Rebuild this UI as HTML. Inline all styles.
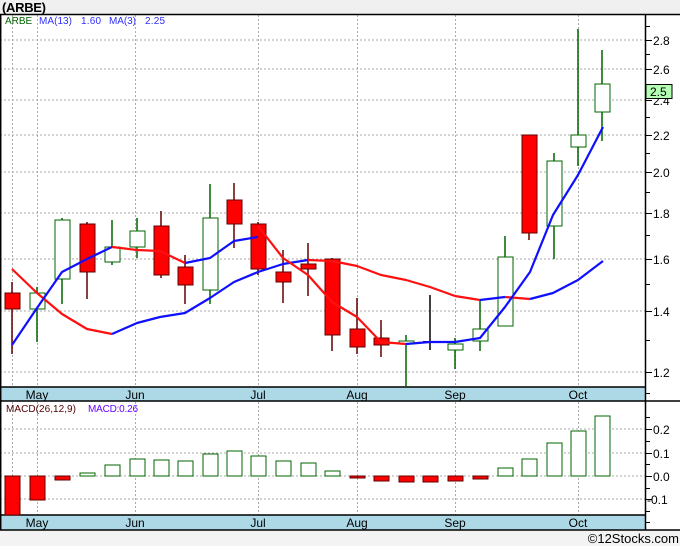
<!DOCTYPE html>
<html><head><meta charset="utf-8"><style>
html,body{margin:0;padding:0;background:#fff;}
svg{display:block;font-family:"Liberation Sans","DejaVu Sans",sans-serif;}
</style></head><body>
<svg width="680" height="546" viewBox="0 0 680 546" xmlns="http://www.w3.org/2000/svg">
<rect x="0" y="0" width="680" height="14" fill="#f0f0f0"/>
<text x="2" y="12" font-size="13" font-weight="bold" fill="#000" textLength="44">(ARBE)</text>
<rect x="0" y="530" width="680" height="16" fill="#f3f3f3"/>
<text x="679" y="543" font-size="13" text-anchor="end" fill="#000">©12Stocks.com</text>

<g stroke="#aaa" stroke-width="1" stroke-dasharray="2,2">
<line x1="0" y1="40" x2="645" y2="40"/><line x1="0" y1="69" x2="645" y2="69"/><line x1="0" y1="100" x2="645" y2="100"/>
<line x1="0" y1="135" x2="645" y2="135"/><line x1="0" y1="172" x2="645" y2="172"/><line x1="0" y1="213" x2="645" y2="213"/>
<line x1="0" y1="259" x2="645" y2="259"/><line x1="0" y1="311" x2="645" y2="311"/><line x1="0" y1="372" x2="645" y2="372"/>
<line x1="0" y1="429" x2="645" y2="429"/><line x1="0" y1="453" x2="645" y2="453"/><line x1="0" y1="476" x2="645" y2="476"/><line x1="0" y1="499" x2="645" y2="499"/>
<g>
<line x1="12.5" y1="15" x2="12.5" y2="387"/><line x1="37.5" y1="15" x2="37.5" y2="387"/><line x1="135.5" y1="15" x2="135.5" y2="387"/><line x1="258.5" y1="15" x2="258.5" y2="387"/><line x1="357.5" y1="15" x2="357.5" y2="387"/><line x1="455.5" y1="15" x2="455.5" y2="387"/><line x1="578.5" y1="15" x2="578.5" y2="387"/>
<line x1="12.5" y1="402" x2="12.5" y2="515"/><line x1="37.5" y1="402" x2="37.5" y2="515"/><line x1="135.5" y1="402" x2="135.5" y2="515"/><line x1="258.5" y1="402" x2="258.5" y2="515"/><line x1="357.5" y1="402" x2="357.5" y2="515"/><line x1="455.5" y1="402" x2="455.5" y2="515"/><line x1="578.5" y1="402" x2="578.5" y2="515"/>
</g></g>

<rect x="0" y="387" width="645" height="14" fill="#add8e6"/>
<rect x="0" y="515" width="645" height="15" fill="#add8e6"/>
<g font-size="12" fill="#000" text-anchor="middle">
<text x="37" y="399">May</text><text x="135" y="399">Jun</text><text x="258" y="399">Jul</text><text x="357" y="399">Aug</text><text x="455" y="399">Sep</text><text x="578" y="399">Oct</text>
<text x="37" y="527">May</text><text x="135" y="527">Jun</text><text x="258" y="527">Jul</text><text x="357" y="527">Aug</text><text x="455" y="527">Sep</text><text x="578" y="527">Oct</text>
</g>

<g stroke="#000" stroke-width="1.5" fill="none">
<line x1="0" y1="14.5" x2="680" y2="14.5"/>
<line x1="0" y1="387" x2="645" y2="387"/>
<line x1="0" y1="401" x2="680" y2="401"/>
<line x1="0" y1="515" x2="645" y2="515"/>
<line x1="0" y1="530" x2="680" y2="530"/>
<line x1="645.5" y1="14" x2="645.5" y2="530"/>
<line x1="0.7" y1="14" x2="0.7" y2="530"/>
</g>

<g stroke="#000" stroke-width="1">
<line x1="645" y1="40.5" x2="652" y2="40.5"/><line x1="645" y1="69.5" x2="652" y2="69.5"/><line x1="645" y1="100.5" x2="652" y2="100.5"/><line x1="645" y1="135.5" x2="652" y2="135.5"/><line x1="645" y1="172.5" x2="652" y2="172.5"/><line x1="645" y1="213.5" x2="652" y2="213.5"/><line x1="645" y1="259.5" x2="652" y2="259.5"/><line x1="645" y1="311.5" x2="652" y2="311.5"/><line x1="645" y1="372.5" x2="652" y2="372.5"/>
<line x1="645" y1="26.5" x2="650" y2="26.5"/><line x1="645" y1="54.5" x2="650" y2="54.5"/><line x1="645" y1="84.5" x2="650" y2="84.5"/><line x1="645" y1="117.5" x2="650" y2="117.5"/><line x1="645" y1="153.5" x2="650" y2="153.5"/><line x1="645" y1="192.5" x2="650" y2="192.5"/><line x1="645" y1="235.5" x2="650" y2="235.5"/><line x1="645" y1="284.5" x2="650" y2="284.5"/><line x1="645" y1="340.5" x2="650" y2="340.5"/>
<line x1="645" y1="417.5" x2="650" y2="417.5"/><line x1="645" y1="429.5" x2="652" y2="429.5"/><line x1="645" y1="441.5" x2="650" y2="441.5"/><line x1="645" y1="453.5" x2="652" y2="453.5"/><line x1="645" y1="464.5" x2="650" y2="464.5"/><line x1="645" y1="476.5" x2="652" y2="476.5"/><line x1="645" y1="488.5" x2="650" y2="488.5"/><line x1="645" y1="499.5" x2="652" y2="499.5"/><line x1="645" y1="511.5" x2="650" y2="511.5"/>
<line x1="645" y1="393.5" x2="650" y2="393.5"/><line x1="645" y1="522.5" x2="650" y2="522.5"/>
</g>
<g font-size="12" fill="#000">
<text x="653" y="45">2.8</text><text x="653" y="74">2.6</text><text x="653" y="105">2.4</text><text x="653" y="140">2.2</text><text x="653" y="177">2.0</text><text x="653" y="218">1.8</text><text x="653" y="264">1.6</text><text x="653" y="316">1.4</text><text x="653" y="377">1.2</text>
<text x="653" y="434">0.2</text><text x="653" y="458">0.1</text><text x="653" y="481">0.0</text><text x="647" y="504">-0.1</text>
</g>
<rect x="646" y="84.5" width="26" height="14" fill="#b4ffb4" stroke="#000" stroke-width="1"/>
<text x="650" y="96" font-size="12" fill="#000">2.5</text>

<g font-size="10">
<text x="5" y="24" fill="#006400">ARBE</text>
<text x="39" y="24" fill="#3030ff" textLength="33">MA(13)</text>
<text x="81" y="24" fill="#3030ff" textLength="20">1.60</text>
<text x="109" y="24" fill="#3030ff" textLength="27">MA(3)</text>
<text x="145" y="24" fill="#3030ff" textLength="20">2.25</text>
<text x="6" y="412" fill="#500000" textLength="70">MACD(26,12,9)</text>
<text x="88" y="412" fill="#6a00ff" textLength="50">MACD:0.26</text>
</g>

<g stroke-width="1.5">
<g stroke="#600000">
<line x1="12" y1="282" x2="12" y2="354"/><line x1="87" y1="222" x2="87" y2="299"/><line x1="161" y1="211" x2="161" y2="278"/><line x1="185" y1="255" x2="185" y2="304"/><line x1="234" y1="183" x2="234" y2="248"/><line x1="258" y1="222" x2="258" y2="275"/><line x1="283" y1="250" x2="283" y2="303"/><line x1="308" y1="243" x2="308" y2="296"/><line x1="332" y1="258" x2="332" y2="351"/><line x1="357" y1="298" x2="357" y2="354"/><line x1="381" y1="320" x2="381" y2="357"/><line x1="529" y1="135" x2="529" y2="240"/>
</g>
<g stroke="#006400">
<line x1="37" y1="287" x2="37" y2="342"/><line x1="62" y1="218" x2="62" y2="304"/><line x1="112" y1="220" x2="112" y2="265"/><line x1="137" y1="218" x2="137" y2="258"/><line x1="210" y1="184" x2="210" y2="304"/><line x1="406" y1="335" x2="406" y2="387"/><line x1="455" y1="338" x2="455" y2="369"/><line x1="480" y1="300" x2="480" y2="351"/><line x1="505" y1="236" x2="505" y2="326"/><line x1="554" y1="153" x2="554" y2="259"/><line x1="578" y1="29" x2="578" y2="166"/><line x1="602" y1="50" x2="602" y2="141"/>
</g>
<line x1="430" y1="295" x2="430" y2="350" stroke="#000"/>
<g fill="#ff0000" stroke="#600000" stroke-width="1">
<rect x="5" y="293" width="15" height="16"/><rect x="80" y="224" width="15" height="48"/><rect x="154" y="226" width="15" height="49"/><rect x="178" y="267" width="15" height="18"/><rect x="227" y="200" width="15" height="24"/><rect x="251" y="224" width="15" height="45"/><rect x="276" y="272" width="15" height="10"/><rect x="301" y="264" width="15" height="5"/><rect x="325" y="259" width="15" height="76"/><rect x="350" y="329" width="15" height="18"/><rect x="374" y="338" width="15" height="7"/><rect x="522" y="135" width="15" height="98"/>
</g>
<g fill="#fff" stroke="#006400" stroke-width="1">
<rect x="30" y="293" width="15" height="16"/><rect x="55" y="220" width="15" height="59"/><rect x="105" y="247" width="15" height="15"/><rect x="130" y="231" width="15" height="16"/><rect x="203" y="218" width="15" height="72"/><rect x="399" y="341" width="15" height="3"/><rect x="448" y="344" width="15" height="6"/><rect x="473" y="329" width="15" height="12"/><rect x="498" y="257" width="15" height="69"/><rect x="547" y="161" width="15" height="65"/><rect x="571" y="135" width="15" height="12"/><rect x="595" y="84" width="15" height="28"/>
</g>
<line x1="423" y1="342" x2="437" y2="342" stroke="#000" stroke-width="2"/>
</g>

<g stroke-width="2.2" fill="none" stroke-linejoin="round">
<polyline stroke="#ff1010" points="12,269 37,293 62,314 87,329 112,334"/>
<polyline stroke="#1010ff" points="112,334 137,323 160,317 185,313 210,298 234,282 258,272 283,264 308,260"/>
<polyline stroke="#ff1010" points="308,260 332,261 357,266 381,275 406,280 430,287 455,296 480,300"/>
<polyline stroke="#1010ff" points="480,300 505,297"/>
<polyline stroke="#ff1010" points="505,297 530,299"/>
<polyline stroke="#1010ff" points="530,299 553,293 578,280 603,261"/>
<polyline stroke="#1010ff" points="12,345 37,308 62,272 87,259 112,247"/>
<polyline stroke="#ff1010" points="112,247 137,250 160,251 185,263"/>
<polyline stroke="#1010ff" points="185,263 210,258 234,241 258,237"/>
<polyline stroke="#ff1010" points="258,226 283,258 308,275 332,302 357,317 381,342 406,344"/>
<polyline stroke="#1010ff" points="406,344 430,342 455,342 480,338 505,307 530,272 553,215 578,175 603,127"/>
</g>

<g fill="#ff0000" stroke="#600000" stroke-width="1">
<rect x="5" y="476" width="15" height="39"/><rect x="30" y="476" width="15" height="24"/><rect x="55" y="476" width="15" height="4"/>
<rect x="350" y="476" width="15" height="2"/><rect x="374" y="476" width="15" height="5"/><rect x="399" y="476" width="15" height="6"/><rect x="423" y="476" width="15" height="6"/><rect x="448" y="476" width="15" height="5"/><rect x="473" y="476" width="15" height="3"/>
</g>
<g fill="#fff" stroke="#006400" stroke-width="1">
<rect x="80" y="473" width="15" height="3"/><rect x="105" y="465" width="15" height="11"/><rect x="130" y="459" width="15" height="17"/><rect x="154" y="460" width="15" height="16"/><rect x="178" y="461" width="15" height="15"/><rect x="203" y="454" width="15" height="22"/><rect x="227" y="451" width="15" height="25"/><rect x="251" y="456" width="15" height="20"/><rect x="276" y="461" width="15" height="15"/><rect x="301" y="463" width="15" height="13"/><rect x="325" y="471" width="15" height="5"/>
<rect x="498" y="468" width="15" height="8"/><rect x="522" y="459" width="15" height="17"/><rect x="547" y="443" width="15" height="33"/><rect x="571" y="431" width="15" height="45"/><rect x="595" y="416" width="15" height="60"/>
</g>
</svg>
</body></html>
